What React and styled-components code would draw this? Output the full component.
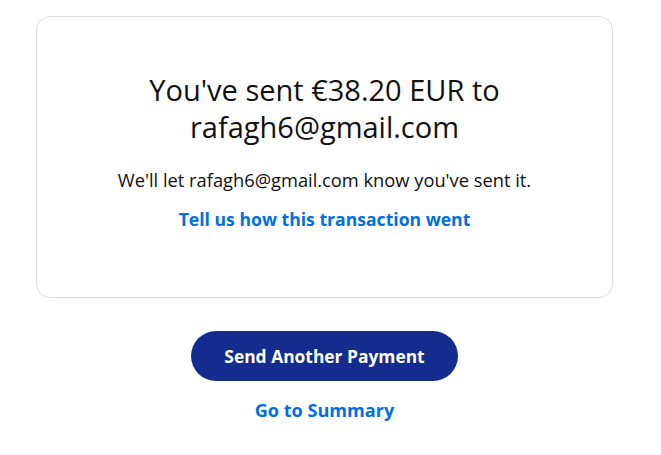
import React from 'react';
import styled, { createGlobalStyle } from 'styled-components';

const Blue = '#0070e0';
const Navy = '#142c8e';

const GlobalStyle = createGlobalStyle`
  body {
    margin: 0;
    background: #ffffff;
    font-family: 'Open Sans', 'Liberation Sans', sans-serif;
    color: #001435;
  }
`;

const Page = styled.div`
  display: flex;
  flex-direction: column;
  align-items: center;
  padding: 16px 48px 0 36px;
`;

const Card = styled.section`
  box-sizing: border-box;
  width: 577px;
  height: 282px;
  border: 1px solid #dcdcdc;
  border-radius: 14px;
  display: flex;
  flex-direction: column;
  align-items: center;
  padding-top: 54px;
  text-align: center;
`;

const Title = styled.h1`
  margin: 0;
  font-size: 29px;
  line-height: 37px;
  font-weight: 400;
  color: #111111;
  max-width: 400px;
`;

const Message = styled.p`
  margin: 23px 0 0;
  font-size: 18.3px;
  line-height: 24px;
  color: #111111;
`;

const TextLink = styled.a`
  display: block;
  margin-top: ${(p) => p.$top || 0}px;
  font-size: ${(p) => p.$size || 17.6}px;
  line-height: 24px;
  font-weight: 700;
  color: ${Blue};
  text-decoration: none;
  cursor: pointer;
`;

const Actions = styled.div`
  display: flex;
  flex-direction: column;
  align-items: center;
  margin-top: 33px;
`;

const PrimaryButton = styled.button`
  width: 267px;
  height: 50px;
  border: none;
  border-radius: 25px;
  background: ${Navy};
  color: #ffffff;
  font-family: inherit;
  font-size: 17.4px;
  font-weight: 700;
  cursor: pointer;
`;

const App = () => (
  <>
    <GlobalStyle />
    <Page>
      <Card>
        <Title>You've sent €38.20 EUR to rafagh6@gmail.com</Title>
        <Message>We'll let rafagh6@gmail.com know you've sent it.</Message>
        <TextLink $top={15}>Tell us how this transaction went</TextLink>
      </Card>
      <Actions>
        <PrimaryButton>Send Another Payment</PrimaryButton>
        <TextLink $top={17} $size={18.1}>Go to Summary</TextLink>
      </Actions>
    </Page>
  </>
);

export default App;
